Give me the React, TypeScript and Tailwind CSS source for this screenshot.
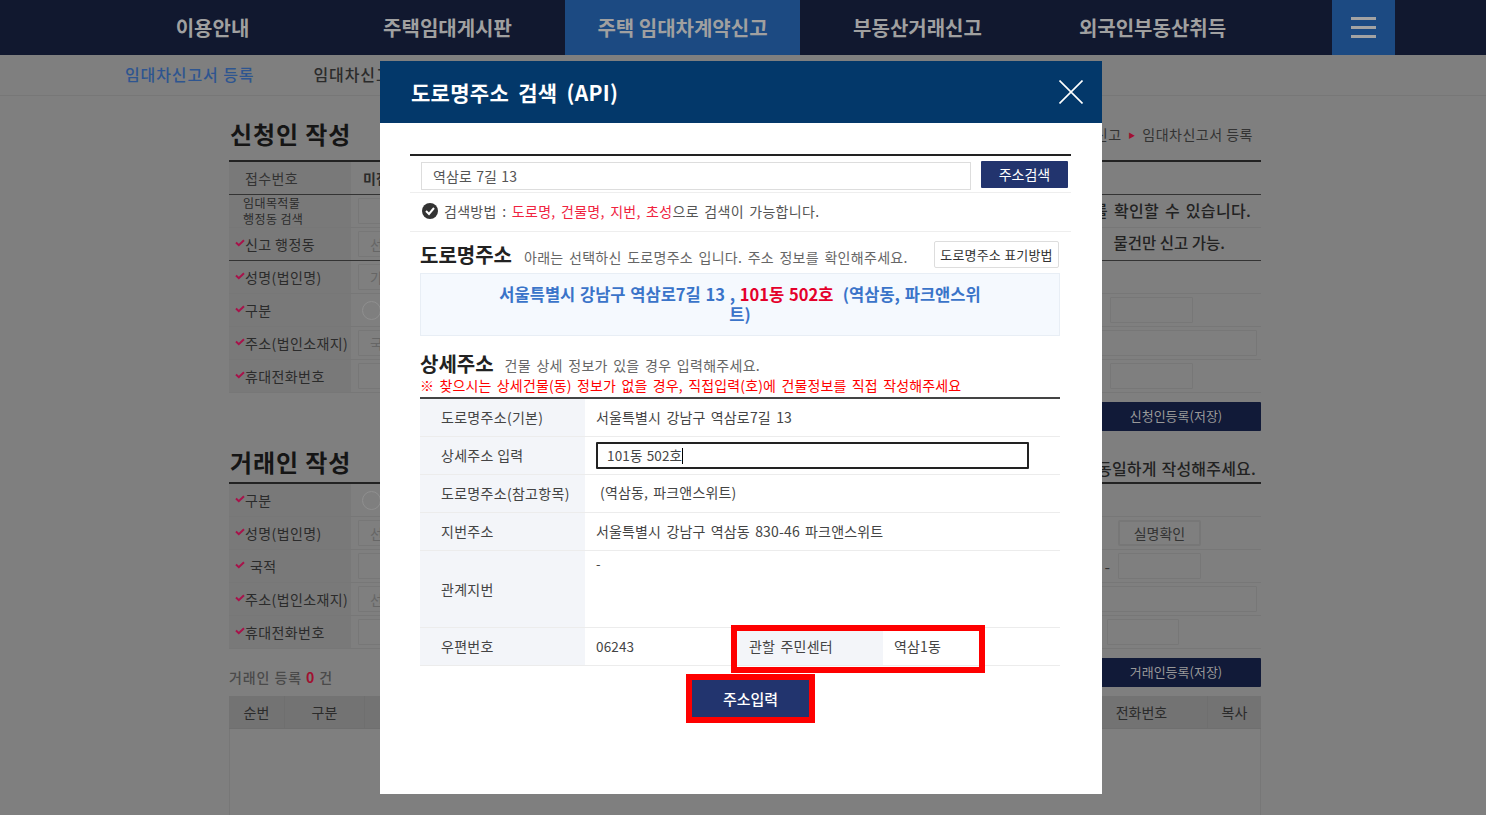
import type { ReactNode } from 'react'

const navItems = ['이용안내', '주택임대게시판', '주택 임대차계약신고', '부동산거래신고', '외국인부동산취득']

function Check() {
  return (
    <svg viewBox="0 0 10 8" className="w-[10px] h-[8px] shrink-0 mb-[2px]">
      <path d="M1 3.5 L3.8 6.2 L9 1.2" fill="none" stroke="#a8124a" strokeWidth="2" />
    </svg>
  )
}

function Field({ text, w = 'w-[200px]' }: { text?: string; w?: string }) {
  return (
    <div className={`${w} h-[26px] border border-[#777] rounded-[1px] px-[11px] text-[14px] leading-[24px] text-[#666] shrink-0`}>
      {text}
    </div>
  )
}

function Radio() {
  return <span className="block w-[19px] h-[19px] ml-[4px] shrink-0 rounded-full border border-[#8f8f8f]" />
}

function Row({ label, required = true, children, right, strong = false }: {
  label: ReactNode
  required?: boolean
  children?: ReactNode
  right?: ReactNode
  strong?: boolean
}) {
  return (
    <div className={`flex h-[33px] border-b ${strong ? 'border-[#333]' : 'border-[#777]'}`}>
      <div className="w-[122px] shrink-0 bg-[#797979] flex items-center pl-[6px] text-[14px] tracking-[0.4px] text-[#2b2b2b] whitespace-nowrap">
        {required ? <Check /> : <span className="w-[10px]" />}
        {label}
      </div>
      <div className="flex-1 flex items-center pl-[7px]">
        {children}
        <div className="ml-auto flex items-center">{right}</div>
      </div>
    </div>
  )
}

function SaveButton({ children }: { children: ReactNode }) {
  return (
    <button className="w-[170px] h-[29px] bg-[#111a38] rounded-[1px] pb-[2px] text-[13px] text-[#999]">{children}</button>
  )
}

function Background() {
  return (
    <div className="absolute inset-0 bg-[#7f7f7f]">
      <nav className="h-[55px] bg-[#11182f] flex pl-[95px]">
        {navItems.map((item, i) => (
          <div
            key={item}
            className={`w-[235px] flex items-center justify-center text-[20px] font-bold text-[#a0a0a0] ${i === 2 ? 'bg-[#1c4a82]' : ''}`}
          >
            {item}
          </div>
        ))}
        <button className="ml-[62px] w-[63px] bg-[#1c4a82] flex flex-col items-center justify-center gap-[6px]">
          <span className="block w-[25px] h-[3px] bg-[#a3a3a3]" />
          <span className="block w-[25px] h-[3px] bg-[#a3a3a3]" />
          <span className="block w-[25px] h-[3px] bg-[#a3a3a3]" />
        </button>
      </nav>

      <div className="h-[41px] border-b border-[#777] flex items-center pl-[125px] gap-[59px] text-[16px] tracking-[0.9px] font-medium pb-[2px]">
        <span className="text-[#2e5590]">임대차신고서 등록</span>
        <span className="text-[#2b2b2b]">임대차신고서 조회</span>
      </div>

      <main className="ml-[229px] w-[1032px]">
        <div className="h-[64px] pt-[12px] flex items-center justify-between">
          <h2 className="pl-[1px] text-[24px] font-bold tracking-[0.9px] text-[#151515]">신청인 작성</h2>
          <span className="pr-[8px] text-[14px] tracking-[0.5px] text-[#333]">
            주택 임대차계약신고 <span className="text-[#a01030] text-[7px] px-[3px] align-middle">▶</span> 임대차신고서 등록
          </span>
        </div>
        <div className="border-t-2 border-[#222]">
          <div className="flex h-[33px] border-b border-[#333]">
            <div className="w-[122px] bg-[#797979] pl-[16px] flex items-center text-[14px] tracking-[0.4px] text-[#333]">접수번호</div>
            <div className="pl-[12px] flex items-center text-[14px] font-bold text-[#2b2b2b]">미접수</div>
          </div>
          <Row
            required={false}
            label={<span className="block text-[12px] leading-[16px] -ml-[2px]">임대목적물<br />행정동 검색</span>}
            right={<span className="pr-[10px] pb-[2px] text-[16px] font-medium tracking-[0.3px] [word-spacing:2px] text-[#222]">주소를 확인할 수 있습니다.</span>}
          >
            <Field />
          </Row>
          <Row
            label="신고 행정동"
            strong
            right={<span className="pr-[36px] pb-[2px] text-[15.5px] font-medium text-[#222]">물건만 신고 가능.</span>}
          >
            <Field text="선택" />
          </Row>
          <Row label="성명(법인명)"><Field text="가나다" /></Row>
          <Row label="구분" right={<div className="mr-[68px]"><Field w="w-[83px]" /></div>}><Radio /></Row>
          <Row label="주소(법인소재지)" right={<div className="mr-[4px]"><Field w="w-[300px]" /></div>}><Field text="국내" w="w-[100px]" /></Row>
          <Row label="휴대전화번호" right={<div className="mr-[68px]"><Field w="w-[83px]" /></div>}><Field /></Row>
        </div>
        <div className="flex justify-end mt-[9px]"><SaveButton>신청인등록(저장)</SaveButton></div>

        <div className="h-[51px] pt-[10px] flex items-center justify-between">
          <h2 className="pl-[1px] text-[24px] font-bold tracking-[0.9px] text-[#151515]">거래인 작성</h2>
          <span className="mt-[12px] pr-[5px] text-[16px] font-medium tracking-[0.2px] [word-spacing:1px] text-[#222]">계약서와 동일하게 작성해주세요.</span>
        </div>
        <div className="border-t-2 border-[#222]">
          <Row label="구분"><Radio /></Row>
          <Row
            label="성명(법인명)"
            right={<button className="mr-[60px] w-[83px] h-[26px] border-2 border-[#777] rounded-[2px] text-[14px] text-[#333]">실명확인</button>}
          >
            <Field text="선택" />
          </Row>
          <Row
            label={<span className="pl-[5px]">국적</span>}
            right={<div className="mr-[60px] flex items-center gap-[8px] text-[#333]">-<Field w="w-[83px]" /></div>}
          >
            <Field />
          </Row>
          <Row label="주소(법인소재지)" right={<div className="mr-[4px]"><Field w="w-[300px]" /></div>}><Field text="선택" /></Row>
          <Row label="휴대전화번호" right={<div className="mr-[82px]"><Field w="w-[72px]" /></div>}><Field /></Row>
        </div>
        <div className="flex justify-between items-end mt-[9px]">
          <span className="mb-[1px] text-[14px] font-medium tracking-[0.9px] text-[#4a4a4a] leading-[18px]">
            거래인 등록 <b className="text-[#a01030]">0</b> 건
          </span>
          <SaveButton>거래인등록(저장)</SaveButton>
        </div>
        <div className="mt-[9px] flex h-[33px] bg-[#737373] border-b border-[#6f6f6f] text-[14px] text-[#2b2b2b]">
          <div className="w-[56px] flex items-center justify-center border-r border-[#6f6f6f]">순번</div>
          <div className="w-[80px] flex items-center justify-center border-r border-[#6f6f6f]">구분</div>
          <div className="flex-1" />
          <div className="w-[132px] flex items-center justify-center border-r border-[#6f6f6f]">전화번호</div>
          <div className="w-[53px] flex items-center justify-center">복사</div>
        </div>
        <div className="h-[90px] border-x border-[#777]" />
      </main>
    </div>
  )
}

function InfoRow({ label, children }: { label: string; children?: ReactNode }) {
  return (
    <div className="flex h-[38px] border-b border-[#ececec]">
      <div className="w-[165px] shrink-0 bg-[#f3f5f9] pl-[21px] flex items-center text-[14px] tracking-[0.3px] text-[#444]">{label}</div>
      <div className="flex-1 pl-[11px] flex items-center text-[14px] tracking-[0.15px] [word-spacing:2px] text-[#444]">{children}</div>
    </div>
  )
}

function AddressModal() {
  return (
    <div className="absolute left-[380px] top-[61px] w-[722px] h-[733px] bg-white">
      <header className="h-[62px] bg-[#03386a] flex items-center justify-between pl-[31px] pr-[19px]">
        <h1 className="text-[21px] font-bold tracking-[0.3px] [word-spacing:4px] text-white pt-[1px]">도로명주소 검색 (API)</h1>
        <svg viewBox="0 0 24 24" className="w-[24px] h-[24px]">
          <path d="M0.5 0.5 L23.5 23.5 M23.5 0.5 L0.5 23.5" stroke="white" strokeWidth="1.6" fill="none" />
        </svg>
      </header>

      <div className="pt-[31px] px-[30px]">
        <div className="w-[661px]">
          <div className="border-t-2 border-[#222] h-[39px] border-b border-b-[#eee] flex pl-[11px] pt-[5px]">
            <input
              readOnly
              defaultValue="역삼로 7길 13"
              className="w-[550px] h-[28px] mt-[1px] border border-[#ddd] px-[11px] pb-[1px] text-[14px] tracking-[0.1px] [word-spacing:1px] text-[#555] outline-none"
            />
            <button className="ml-[10px] w-[87px] h-[27px] bg-[#22346e] rounded-[1px] text-[14px] text-white">주소검색</button>
          </div>
          <div className="h-[39px] border-b border-[#eee] flex items-center pl-[12px] pb-[2px] text-[14px] tracking-[0.3px] [word-spacing:2px] text-[#555]">
            <svg viewBox="0 0 16 16" className="w-[16px] h-[16px] mr-[6px] shrink-0">
              <circle cx="8" cy="8" r="8" fill="#333" />
              <path d="M4 8 L7 11 L12 5" fill="none" stroke="white" strokeWidth="2" />
            </svg>
            검색방법 :&nbsp;<span className="text-[#f0233f]">도로명, 건물명, 지번, 초성</span>으로 검색이 가능합니다.
          </div>
        </div>

        <div className="ml-[10px] w-[640px]">
          <div className="h-[41px] flex items-center justify-between pt-[4px]">
            <div className="flex items-baseline gap-[12px]">
              <h2 className="text-[20px] font-bold text-[#222]">도로명주소</h2>
              <span className="text-[14px] tracking-[0.3px] [word-spacing:2px] text-[#666]">아래는 선택하신 도로명주소 입니다. 주소 정보를 확인해주세요.</span>
            </div>
            <button className="w-[125px] h-[27px] mr-[1px] border border-[#ddd] rounded-[2px] text-[13px] tracking-[0.2px] text-[#333] whitespace-nowrap">도로명주소 표기방법</button>
          </div>
          <div className="h-[63px] bg-[#f5f9fe] border border-[#e8eef5] pt-[10px] text-center text-[16.5px] leading-[20px] [word-spacing:1px] font-bold text-[#3a74c9]">
            서울특별시 강남구 역삼로7길 13 , <span className="text-[#e4002b]">101동 502호</span>&nbsp; (역삼동, 파크앤스위<br />트)
          </div>

          <div className="mt-[15px] flex items-center gap-[11px] h-[25px]">
            <h2 className="text-[20px] font-bold text-[#222]">상세주소</h2>
            <span className="text-[14px] tracking-[0.3px] [word-spacing:2px] text-[#666] pt-[3px]">건물 상세 정보가 있을 경우 입력해주세요.</span>
          </div>
          <p className="h-[21px] text-[14px] leading-[18px] tracking-[0.15px] [word-spacing:2px] text-[#f00] whitespace-nowrap">※ 찾으시는 상세건물(동) 정보가 없을 경우, 직접입력(호)에 건물정보를 직접 작성해주세요</p>

          <div className="border-t-2 border-[#444]">
            <InfoRow label="도로명주소(기본)"><span className="pb-[1px]">서울특별시 강남구 역삼로7길 13</span></InfoRow>
            <InfoRow label="상세주소 입력">
              <div className="w-[433px] h-[27px] border-2 border-[#222] rounded-[1px] pl-[9px] flex items-center text-[13.5px] [word-spacing:1px]">
                101동 502호<span className="inline-block w-px h-[16px] bg-black" />
              </div>
            </InfoRow>
            <InfoRow label="도로명주소(참고항목)"><span className="pl-[4px] pb-[3px]">(역삼동, 파크앤스위트)</span></InfoRow>
            <InfoRow label="지번주소">서울특별시 강남구 역삼동 830-46 파크앤스위트</InfoRow>
            <div className="flex h-[77px] border-b border-[#ececec]">
              <div className="w-[165px] bg-[#f3f5f9] pl-[21px] flex items-center text-[14px] tracking-[0.3px] text-[#444]">관계지번</div>
              <div className="pl-[11px] pt-[3px] text-[13px] text-[#444]">-</div>
            </div>
            <InfoRow label="우편번호">
              <span className="w-[141px] shrink-0 text-[13.5px]">06243</span>
              <div className="relative flex h-full w-[243px] items-center">
                <div className="h-full w-[146px] shrink-0 bg-[#f3f5f9] pl-[12px] flex items-center tracking-[0.2px]">관할 주민센터</div>
                <span className="pl-[11px]">역삼1동</span>
                <span className="absolute -left-[6px] -top-[3px] w-[254px] h-[48px] border-[6px] border-[#fe0000]" />
              </div>
            </InfoRow>
          </div>

          <div className="ml-[266px] mt-[8px] w-[129px] h-[49px] border-[6px] border-[#fe0000]">
            <button className="w-full h-full pt-[1px] bg-[#22346e] text-[15px] font-medium text-white">주소입력</button>
          </div>
        </div>
      </div>
    </div>
  )
}

export default function App() {
  return (
    <div className="relative w-full h-[815px] overflow-hidden font-['Noto_Sans_CJK_KR',sans-serif]">
      <Background />
      <AddressModal />
    </div>
  )
}
